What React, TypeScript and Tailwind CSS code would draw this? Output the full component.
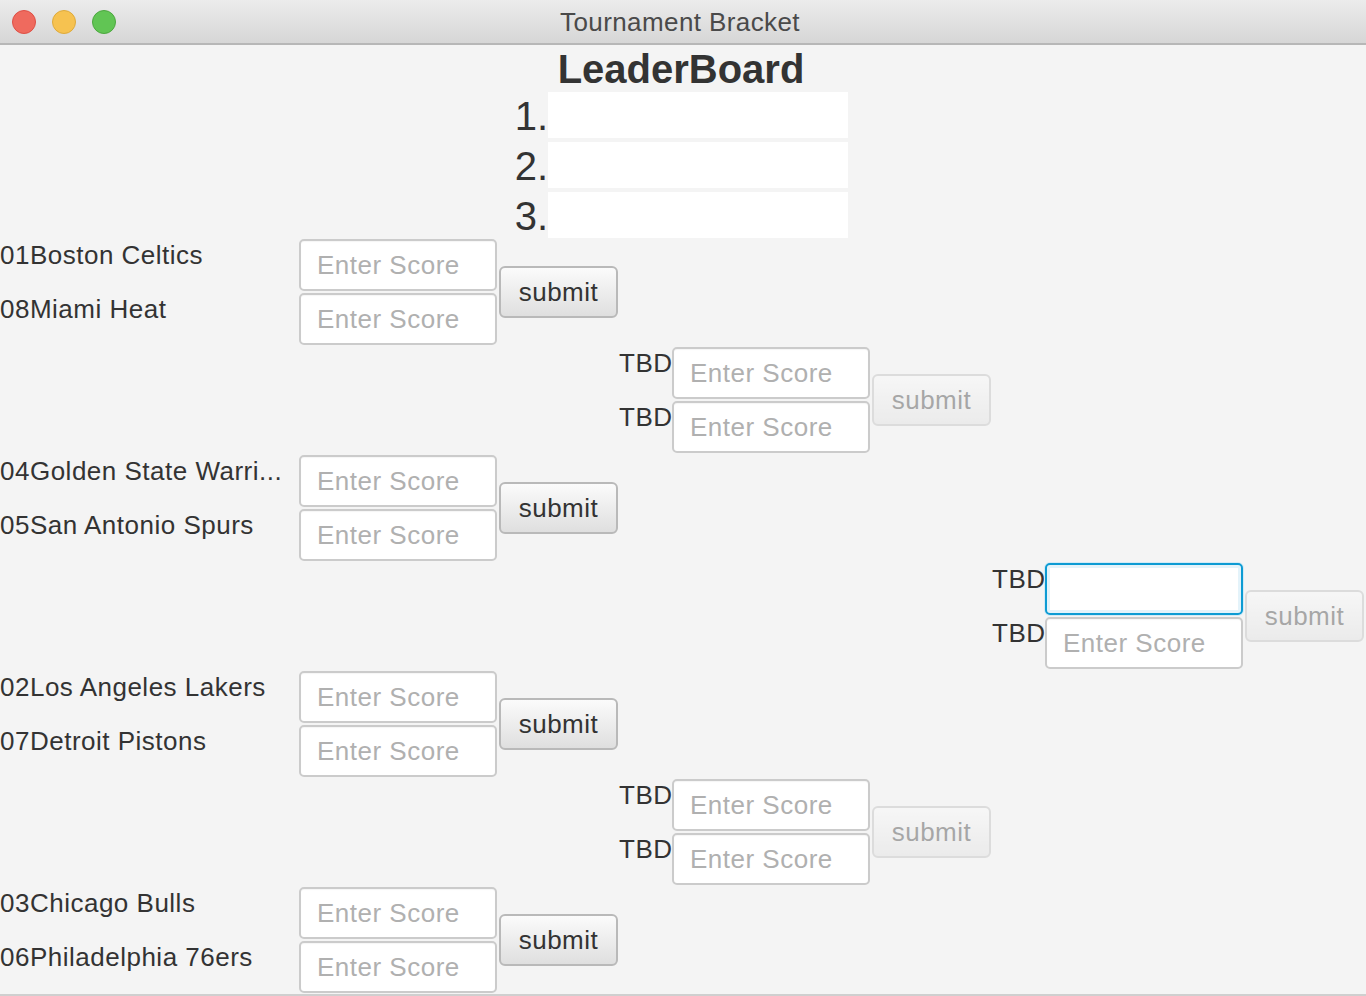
import React from "react";

const FONT = "font-['Liberation_Sans','Helvetica',Arial,sans-serif]";

function TeamLabel({ text, pos }: { text: string; pos: string }) {
  return (
    <div
      className={`${pos} mt-[3px] self-start text-[26px] leading-[29px] tracking-[0.5px] text-[#333333] whitespace-nowrap`}
    >
      {text}
    </div>
  );
}

function ScoreField({ pos, focused }: { pos: string; focused?: boolean }) {
  if (focused) {
    return (
      <div
        className={`${pos} my-[1px] h-[52px] w-[198px] rounded-[5px] border-2 border-[#0d9bd3] bg-white shadow-[0_0_0_1px_#d3ebf6,inset_0_0_0_3px_#e4f3fa]`}
      />
    );
  }
  return (
    <div
      className={`${pos} my-[1px] flex h-[52px] w-[198px] items-center rounded-[5px] border-2 border-[#cbcbcb] bg-white pl-[16px] text-[26px] tracking-[0.5px] text-[#b0b0b0] shadow-[inset_0_1px_1px_rgba(0,0,0,0.04)]`}
    >
      Enter Score
    </div>
  );
}

function SubmitButton({ pos, disabled }: { pos: string; disabled?: boolean }) {
  return (
    <div
      className={`${pos} ${disabled ? "opacity-40" : ""} flex h-[52px] w-[119px] items-center justify-center self-center rounded-[6px] border-2 border-[#b9b9b9] bg-gradient-to-b from-[#fbfbfb] to-[#dfdfdf] text-[26px] tracking-[0.5px] text-[#333333]`}
    >
      submit
    </div>
  );
}

export default function App() {
  return (
    <div className={`${FONT} h-[996px] w-[1366px] overflow-hidden bg-[#f4f4f4]`}>
      {/* Title bar */}
      <div className="grid h-[45px] grid-cols-[1fr_auto_1fr] items-center border-b-2 border-[#b7b7b7] bg-gradient-to-b from-[#ececec] to-[#d6d6d6]">
        <div className="flex items-center gap-[16px] pl-[12px]">
          <div className="h-[24px] w-[24px] rounded-full border border-[#de4f45] bg-[#ef6a5e]" />
          <div className="h-[24px] w-[24px] rounded-full border border-[#deaa3b] bg-[#f6c250]" />
          <div className="h-[24px] w-[24px] rounded-full border border-[#4ca73f] bg-[#61c554]" />
        </div>
        <div className="pr-[6px] text-[26px] leading-[30px] tracking-[0.4px] text-[#4a4a4a]">
          Tournament Bracket
        </div>
        <div />
      </div>

      {/* Leaderboard */}
      <div className="flex flex-col items-center">
        <div className="mt-[2px] h-[45px] pr-[4px] text-[40px] font-bold leading-[45px] text-[#333333]">
          LeaderBoard
        </div>
        <div className="flex flex-col gap-[4px]">
          {["1.", "2.", "3."].map((n) => (
            <div key={n} className="flex h-[46px] items-start">
              <div className="flex h-[46px] w-[30px] justify-end whitespace-nowrap text-[40px] leading-[49px] text-[#333333]">
                {n}
              </div>
              <div className="h-[46px] w-[300px] bg-white" />
            </div>
          ))}
        </div>
      </div>

      {/* Bracket */}
      <div className="grid grid-cols-[299px_200px_120px_53px_200px_120px_53px_200px_121px] grid-rows-[repeat(14,54px)] border-b-2 border-[#cfcfcf]">
        {/* Round 1 - group 1 */}
        <TeamLabel pos="col-start-1 row-start-1" text="01Boston Celtics" />
        <TeamLabel pos="col-start-1 row-start-2" text="08Miami Heat" />
        <ScoreField pos="col-start-2 row-start-1" />
        <ScoreField pos="col-start-2 row-start-2" />
        <SubmitButton pos="col-start-3 row-start-1 row-span-2" />

        {/* Round 2 - group 1 */}
        <TeamLabel pos="col-start-4 row-start-3" text="TBD" />
        <TeamLabel pos="col-start-4 row-start-4" text="TBD" />
        <ScoreField pos="col-start-5 row-start-3" />
        <ScoreField pos="col-start-5 row-start-4" />
        <SubmitButton pos="col-start-6 row-start-3 row-span-2" disabled />

        {/* Round 1 - group 2 */}
        <TeamLabel pos="col-start-1 row-start-5" text="04Golden State Warri..." />
        <TeamLabel pos="col-start-1 row-start-6" text="05San Antonio Spurs" />
        <ScoreField pos="col-start-2 row-start-5" />
        <ScoreField pos="col-start-2 row-start-6" />
        <SubmitButton pos="col-start-3 row-start-5 row-span-2" />

        {/* Round 3 */}
        <TeamLabel pos="col-start-7 row-start-7" text="TBD" />
        <TeamLabel pos="col-start-7 row-start-8" text="TBD" />
        <ScoreField pos="col-start-8 row-start-7" focused />
        <ScoreField pos="col-start-8 row-start-8" />
        <SubmitButton pos="col-start-9 row-start-7 row-span-2" disabled />

        {/* Round 1 - group 3 */}
        <TeamLabel pos="col-start-1 row-start-9" text="02Los Angeles Lakers" />
        <TeamLabel pos="col-start-1 row-start-10" text="07Detroit Pistons" />
        <ScoreField pos="col-start-2 row-start-9" />
        <ScoreField pos="col-start-2 row-start-10" />
        <SubmitButton pos="col-start-3 row-start-9 row-span-2" />

        {/* Round 2 - group 2 */}
        <TeamLabel pos="col-start-4 row-start-11" text="TBD" />
        <TeamLabel pos="col-start-4 row-start-12" text="TBD" />
        <ScoreField pos="col-start-5 row-start-11" />
        <ScoreField pos="col-start-5 row-start-12" />
        <SubmitButton pos="col-start-6 row-start-11 row-span-2" disabled />

        {/* Round 1 - group 4 */}
        <TeamLabel pos="col-start-1 row-start-13" text="03Chicago Bulls" />
        <TeamLabel pos="col-start-1 row-start-14" text="06Philadelphia 76ers" />
        <ScoreField pos="col-start-2 row-start-13" />
        <ScoreField pos="col-start-2 row-start-14" />
        <SubmitButton pos="col-start-3 row-start-13 row-span-2" />
      </div>
    </div>
  );
}
